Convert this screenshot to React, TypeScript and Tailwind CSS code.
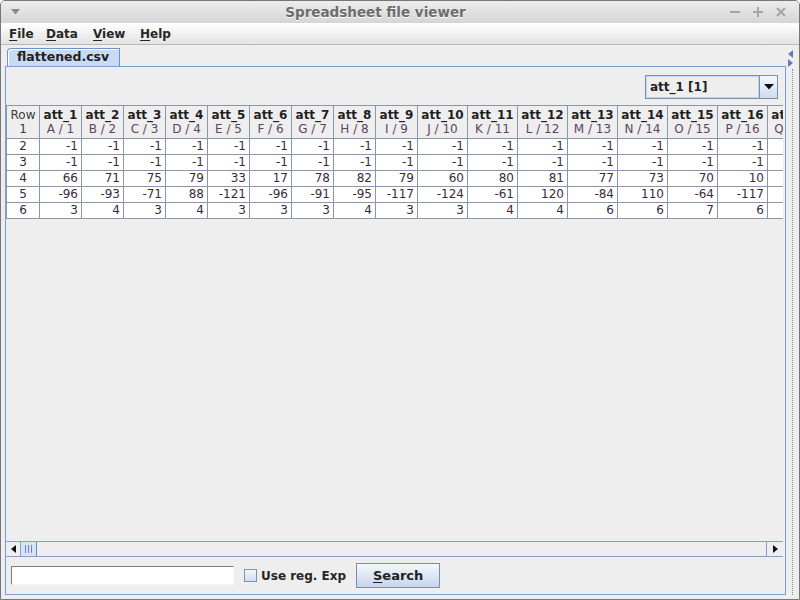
import React from 'react'

// column definitions: name, letter label, width incl. right grid line
const cols: [string, string, number][] = [
  ['att_1', 'A / 1', 42],
  ['att_2', 'B / 2', 42],
  ['att_3', 'C / 3', 42],
  ['att_4', 'D / 4', 42],
  ['att_5', 'E / 5', 42],
  ['att_6', 'F / 6', 42],
  ['att_7', 'G / 7', 42],
  ['att_8', 'H / 8', 42],
  ['att_9', 'I / 9', 42],
  ['att_10', 'J / 10', 50],
  ['att_11', 'K / 11', 50],
  ['att_12', 'L / 12', 50],
  ['att_13', 'M / 13', 50],
  ['att_14', 'N / 14', 50],
  ['att_15', 'O / 15', 50],
  ['att_16', 'P / 16', 50],
  ['att_17', 'Q / 17', 50],
]

const rows: (number | null)[][] = [
  [-1, -1, -1, -1, -1, -1, -1, -1, -1, -1, -1, -1, -1, -1, -1, -1, null],
  [-1, -1, -1, -1, -1, -1, -1, -1, -1, -1, -1, -1, -1, -1, -1, -1, null],
  [66, 71, 75, 79, 33, 17, 78, 82, 79, 60, 80, 81, 77, 73, 70, 10, null],
  [-96, -93, -71, 88, -121, -96, -91, -95, -117, -124, -61, 120, -84, 110, -64, -117, null],
  [3, 4, 3, 4, 3, 3, 3, 4, 3, 3, 4, 4, 6, 6, 7, 6, null],
]

function Mn({ c }: { c: string }) {
  return <span className="underline underline-offset-2">{c}</span>
}

export default function App() {
  return (
    <div className="w-[800px] h-[600px] flex flex-col bg-[#eeeeee] border border-[#777777] rounded-t-[5px] overflow-hidden text-[12px] text-[#222222] font-['DejaVu_Sans',sans-serif]">
      {/* title bar */}
      <div className="h-[22px] flex items-center bg-gradient-to-b from-[#ededed] to-[#d5d5d5]">
        <div className="w-[29px] flex justify-center">
          <svg width="9" height="6" viewBox="0 0 9 6">
            <path d="M0 0 L9 0 L4.5 5.5 Z" fill="#8a8a8a" />
          </svg>
        </div>
        <div className="flex-1 text-center font-bold text-[13.5px] text-[#6c6c6c] [text-shadow:0_1px_0_#ffffff]">
          Spreadsheet file viewer
        </div>
        <div className="w-[78px] flex items-center gap-[13px] pl-[9px]">
          <svg width="10" height="10" viewBox="0 0 10 10">
            <path d="M0 5 H10" stroke="#a5a5a5" strokeWidth="2" />
          </svg>
          <svg width="10" height="10" viewBox="0 0 10 10">
            <path d="M0 5 H10 M5 0 V10" stroke="#a5a5a5" strokeWidth="2" />
          </svg>
          <svg width="10" height="10" viewBox="0 0 10 10">
            <path d="M1 1 L9 9 M9 1 L1 9" stroke="#a5a5a5" strokeWidth="2" />
          </svg>
        </div>
      </div>

      {/* menu bar */}
      <div className="h-[22px] flex items-center pl-[8px] font-bold text-[#262626] bg-gradient-to-b from-[#ffffff] to-[#e3e3e3] border-b border-[#b8b8b8]">
        <span className="w-[37px]"><Mn c="F" />ile</span>
        <span className="w-[47px]"><Mn c="D" />ata</span>
        <span className="w-[47px]"><Mn c="V" />iew</span>
        <span><Mn c="H" />elp</span>
      </div>

      {/* content */}
      <div className="flex-1 flex min-h-0 pl-[4px]">
        <div className="w-[781px] flex flex-col pb-[4px]">
          {/* tab strip */}
          <div className="h-[21px] flex items-end pl-[2px] pt-[3px]">
            <div className="w-[113px] h-[18px] flex items-center pl-[9px] font-bold text-[12.5px] text-[#1f1f1f] bg-[#c8dbf2] border border-b-0 border-[#6f90c8] rounded-tl-[4px] shadow-[inset_1px_1px_0_#ffffff]">
              flattened.csv
            </div>
          </div>

          {/* panel */}
          <div className="flex-1 flex flex-col border border-[#7f9dd0] min-h-0">
            <div className="h-[8px]" />
            <div className="flex justify-end pr-[7px]">
              <div className="w-[133px] h-[24px] flex border border-[#7d8fae] bg-[#eeeeee]">
                <div className="flex-1 flex items-center pl-[3px] font-bold text-[#1f1f1f] border border-[#c4d5ec]">
                  att_1 [1]
                </div>
                <div className="w-[18px] flex items-center justify-center border-l border-[#7d8fae] bg-gradient-to-b from-[#f6f9fd] to-[#cfdcee]">
                  <svg width="10" height="6" viewBox="0 0 10 6">
                    <path d="M0 0 L10 0 L5 5.5 Z" fill="#111111" />
                  </svg>
                </div>
              </div>
            </div>
            <div className="h-[6px]" />

            {/* scroll pane */}
            <div className="w-[777px] flex-1 flex flex-col min-h-0">
              <div className="flex-1 overflow-hidden">
                {/* header */}
                <div className="flex w-max border-l border-t border-b border-[#8a97ab]">
                  <div className="w-[33px] h-[32px] flex flex-col items-center justify-center leading-[14px] border-r border-[#8a97ab] text-[#3a3a3a]">
                    <span>Row</span>
                    <span>1</span>
                  </div>
                  {cols.map(([n, l, w]) => (
                    <div
                      key={n}
                      className="h-[32px] flex flex-col items-center justify-center leading-[14px] border-r border-[#8a97ab] whitespace-nowrap overflow-hidden"
                      style={{ width: w }}
                    >
                      <span className="font-bold text-[#1f1f1f]">{n}</span>
                      <span className="text-[#5d4563]">{l}</span>
                    </div>
                  ))}
                </div>
                {/* data rows */}
                {rows.map((r, i) => (
                  <div key={i} className="flex w-max border-l border-b border-[#8a97ab] bg-white">
                    <div className="w-[33px] h-[15px] flex items-center justify-center leading-[15px] border-r border-[#8a97ab] text-[#3b2a3b]">
                      {i + 2}
                    </div>
                    {r.map((v, j) => (
                      <div
                        key={j}
                        className="h-[15px] flex items-center justify-end pr-[3px] leading-[15px] border-r border-[#8a97ab] text-[#3b2a3b]"
                        style={{ width: cols[j][2] }}
                      >
                        {v === null ? '' : v}
                      </div>
                    ))}
                  </div>
                ))}
              </div>

              {/* horizontal scrollbar */}
              <div className="h-[16px] flex border-t border-b border-[#8a9fc2] bg-[#eeeeee]">
                <div className="w-[15px] flex items-center justify-center border-r border-[#8a9fc2]">
                  <svg width="5" height="8" viewBox="0 0 5 8">
                    <path d="M5 0 L5 8 L0 4 Z" fill="#111111" />
                  </svg>
                </div>
                <div className="w-[16px] flex items-center justify-center gap-[2px] bg-[#d6e3f3] border-r border-[#6e89b7]">
                  <div className="w-[1px] h-[8px] bg-[#6e89b7]" />
                  <div className="w-[1px] h-[8px] bg-[#6e89b7]" />
                  <div className="w-[1px] h-[8px] bg-[#6e89b7]" />
                </div>
                <div className="flex-1" />
                <div className="w-[17px] flex items-center justify-center border-l border-[#8a9fc2]">
                  <svg width="5" height="8" viewBox="0 0 5 8">
                    <path d="M0 0 L0 8 L5 4 Z" fill="#111111" />
                  </svg>
                </div>
              </div>
            </div>

            {/* search row */}
            <div className="h-[37px] flex items-center pl-[5px]">
              <div className="w-[223px] h-[19px] bg-white border border-[#7c7c7c] border-b-[#f4f4f4] border-r-[#f4f4f4]" />
              <div className="ml-[10px] w-[13px] h-[13px] border border-[#7f93b3] bg-gradient-to-b from-[#f3f6fb] to-[#d2ddee]" />
              <span className="ml-[4px] font-bold text-[#262626]">Use reg. Exp</span>
              <div className="ml-[10px] w-[84px] h-[25px] flex items-center justify-center font-bold text-[13px] text-[#1f1f1f] border border-[#7b8da8] bg-gradient-to-b from-[#f5f8fc] to-[#c6d5ea]">
                <span><Mn c="S" />earch</span>
              </div>
            </div>
          </div>
        </div>

        {/* right strip: tab scroll arrows and divider */}
        <div className="flex-1 flex flex-col items-start pl-[2px] pt-[5px] pb-[4px]">
          <svg width="5" height="8" viewBox="0 0 5 8">
            <path d="M5 0 L5 8 L0 4 Z" fill="#5a7fbf" />
          </svg>
          <svg width="5" height="8" viewBox="0 0 5 8" className="mt-[1px]">
            <path d="M0 0 L0 8 L5 4 Z" fill="#5a7fbf" />
          </svg>
          <div className="flex-1 mt-[2px] ml-[4px] border-l border-dotted border-[#8c8c8c]" />
        </div>
      </div>
    </div>
  )
}
